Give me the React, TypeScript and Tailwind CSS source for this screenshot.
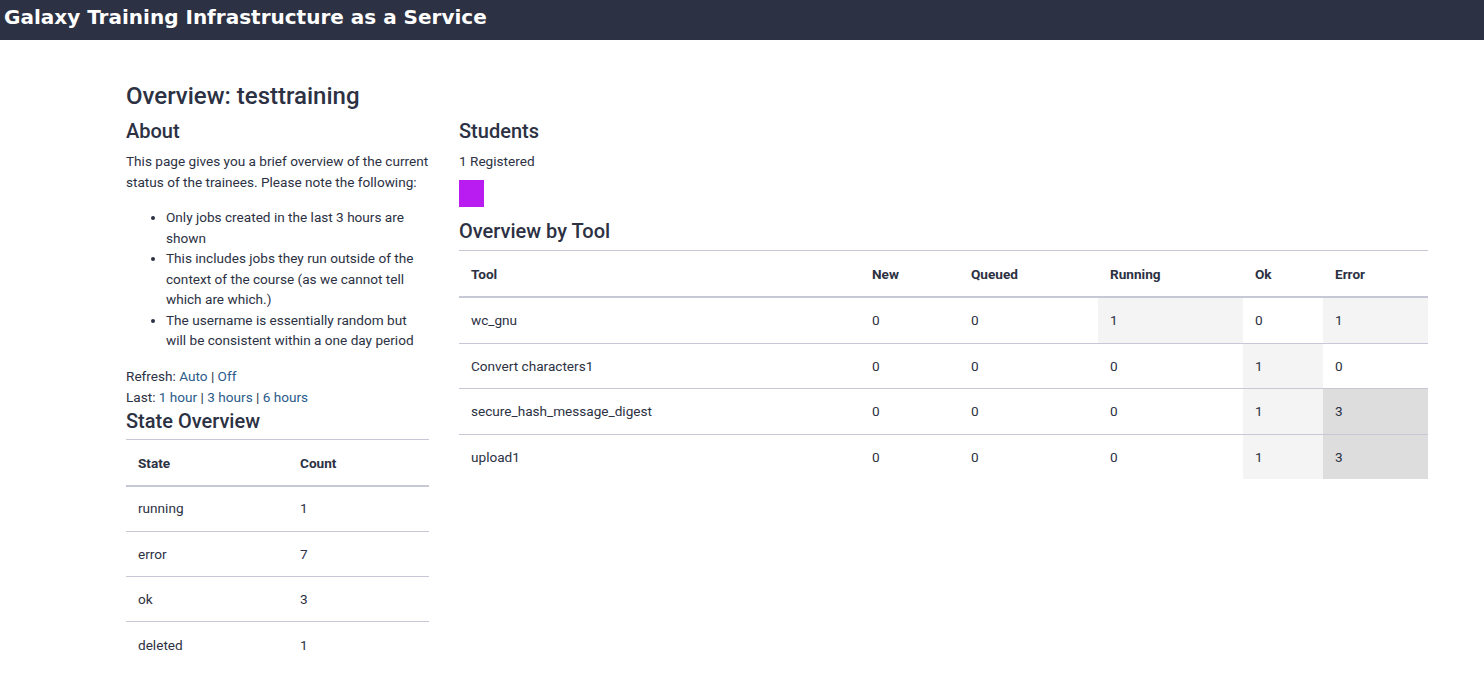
import React from 'react'

const toolRows = [
  { tool: 'wc_gnu', n: 0, q: 0, r: 1, ok: 0, err: 1 },
  { tool: 'Convert characters1', n: 0, q: 0, r: 0, ok: 1, err: 0 },
  { tool: 'secure_hash_message_digest', n: 0, q: 0, r: 0, ok: 1, err: 3 },
  { tool: 'upload1', n: 0, q: 0, r: 0, ok: 1, err: 3 },
]

const states = [
  { state: 'running', count: 1 },
  { state: 'error', count: 7 },
  { state: 'ok', count: 3 },
  { state: 'deleted', count: 1 },
]

// shade a cell by how many jobs it holds
function shade(v: number) {
  if (v >= 3) return 'bg-[#dddddd]'
  if (v >= 1) return 'bg-[#f4f4f4]'
  return ''
}

function Link({ children }: { children: React.ReactNode }) {
  return <a href="#" className="text-[#2b5b8b]">{children}</a>
}

export default function App() {
  return (
    <div className="min-h-screen bg-white text-[#2c3143] font-['Roboto',sans-serif]">
      <div className="h-10 bg-[#2c3143] px-1 font-['DejaVu_Sans',sans-serif] font-bold text-[20px] leading-[34px] text-white">
        Galaxy Training Infrastructure as a Service
      </div>

      <div className="ml-[126px] w-[1302px] pt-[42px]">
        <h1 className="text-[24px] leading-[29px] font-medium">Overview: testtraining</h1>

        <div className="flex gap-[30px] mt-2">
          <div className="w-[303px] shrink-0">
            <h2 className="text-[20px] leading-6 font-medium">About</h2>
            <p className="mt-[8px] text-[13.6px] leading-[21px]">
              This page gives you a brief overview of the current status of the trainees. Please note the following:
            </p>
            <ul className="mt-[14px] list-disc pl-10 text-[13.6px] leading-[20.5px] marker:text-[#2c3143]">
              <li>Only jobs created in the last 3 hours are shown</li>
              <li>This includes jobs they run outside of the context of the course (as we cannot tell which are which.)</li>
              <li>The username is essentially random but will be consistent within a one day period</li>
            </ul>
            <div className="mt-[15px] text-[13.6px] leading-[21px]">
              <div>Refresh: <Link>Auto</Link> | <Link>Off</Link></div>
              <div>Last: <Link>1 hour</Link> | <Link>3 hours</Link> | <Link>6 hours</Link></div>
            </div>
            <h2 className="mt-[1px] text-[20px] leading-6 font-medium">State Overview</h2>
            <div className="mt-[6px] border-t border-[#c6c8d6] text-[13.6px]">
              <div className="flex h-[47px] items-center pt-[2px] border-b-2 border-[#c6c8d6] font-bold">
                <div className="w-[162px] px-3">State</div>
                <div className="flex-1 px-3">Count</div>
              </div>
              {states.map((s, i) => (
                <div key={s.state} className={`flex h-[45.3px] items-center ${i < states.length - 1 ? 'border-b border-[#c6c8d6]' : ''}`}>
                  <div className="w-[162px] px-3">{s.state}</div>
                  <div className="flex-1 px-3">{s.count}</div>
                </div>
              ))}
            </div>
          </div>

          <div className="flex-1">
            <h2 className="text-[20px] leading-6 font-medium">Students</h2>
            <p className="mt-[8px] text-[13.6px] leading-[21px]">1 Registered</p>
            <div className="mt-[8px] w-[25px] h-[27px] bg-[#b81cf0]" />
            <h2 className="mt-3 text-[20px] leading-6 font-medium">Overview by Tool</h2>
            <div className="mt-[7px] border-t border-[#c6c8d6] text-[13.6px]">
              <div className="flex h-[47px] items-center pt-[1px] border-b-2 border-[#c6c8d6] font-bold">
                <div className="w-[401px] px-3">Tool</div>
                <div className="w-[99px] px-3">New</div>
                <div className="w-[139px] px-3">Queued</div>
                <div className="w-[145px] px-3">Running</div>
                <div className="w-[80px] px-3">Ok</div>
                <div className="flex-1 px-3">Error</div>
              </div>
              {toolRows.map((r, i) => (
                <div key={r.tool} className={`flex ${i < toolRows.length - 1 ? 'h-[45.5px] border-b border-[#c6c8d6]' : 'h-[44.5px]'}`}>
                  <div className="w-[401px] px-3 flex items-center">{r.tool}</div>
                  <div className="w-[99px] px-3 flex items-center">{r.n}</div>
                  <div className="w-[139px] px-3 flex items-center">{r.q}</div>
                  <div className={`w-[145px] px-3 flex items-center ${shade(r.r)}`}>{r.r}</div>
                  <div className={`w-[80px] px-3 flex items-center ${shade(r.ok)}`}>{r.ok}</div>
                  <div className={`flex-1 px-3 flex items-center ${shade(r.err)}`}>{r.err}</div>
                </div>
              ))}
            </div>
          </div>
        </div>
      </div>
    </div>
  )
}
